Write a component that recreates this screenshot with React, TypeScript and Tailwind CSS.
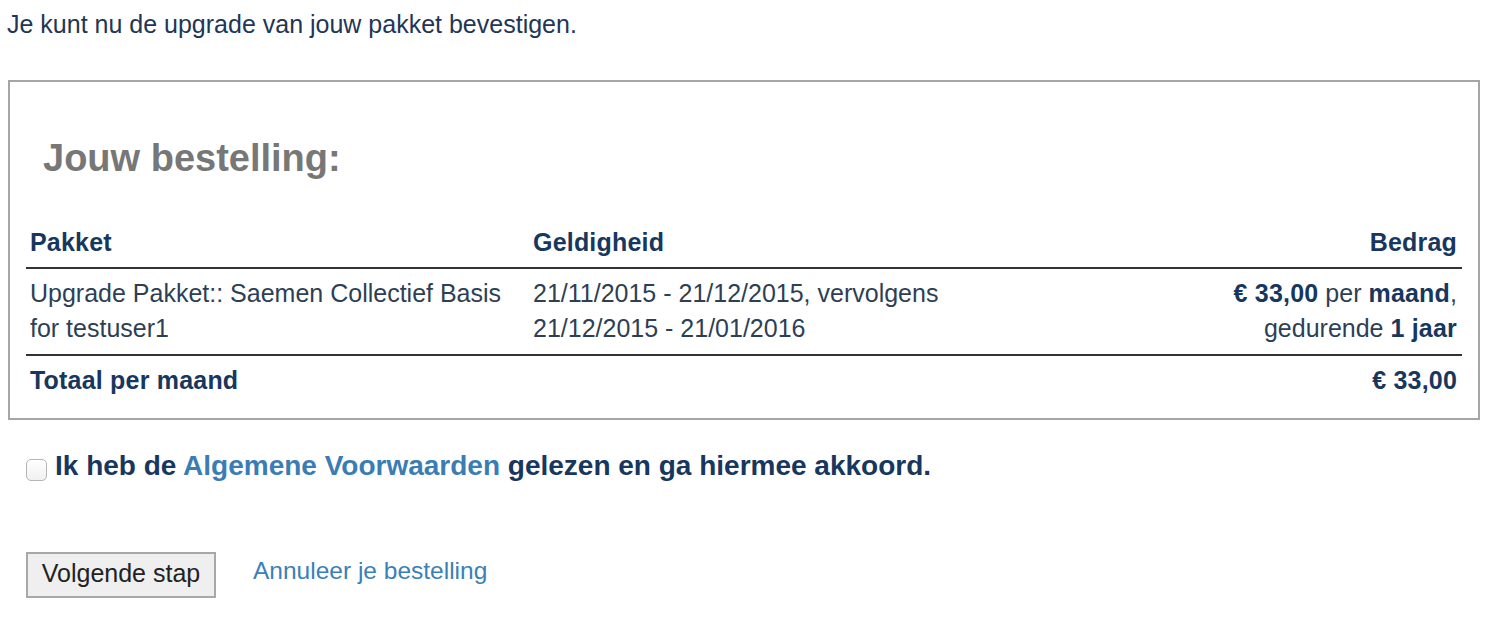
import React from "react";

export default function App() {
  const navy = "text-[#17375e] tracking-[0.2px]";
  return (
    <div className="w-[1500px] h-[621px] bg-white font-['Liberation_Sans',Arial,sans-serif] text-[#17375e] pl-[7px] pr-[20px] pt-[10px]">
      <p className="text-[25px] leading-[28px] text-[#1f3656]">Je kunt nu de upgrade van jouw pakket bevestigen.</p>

      <div className="mt-[42px] ml-[1px] border-2 border-[#a6a6a6] px-[16px] pt-[54px] pb-[22px]">
        <h2 className="ml-[17px] text-[38px] leading-[44px] font-bold text-[#777777]">Jouw bestelling:</h2>
        <table className="mt-[47px] w-full border-collapse text-[25px]">
          <thead>
            <tr className="border-b-2 border-[#333333]">
              <th className="text-left font-bold tracking-[0.2px] pl-[4px] pb-[10px] w-[507px] leading-[30px]">Pakket</th>
              <th className="text-left font-bold tracking-[0.2px] pb-[10px] leading-[30px]">Geldigheid</th>
              <th className="text-right font-bold tracking-[0.2px] pr-[5px] pb-[10px] leading-[30px]">Bedrag</th>
            </tr>
          </thead>
          <tbody>
            <tr className="border-b-2 border-[#333333] align-top">
              <td className="pl-[4px] pt-[7px] pb-[8px] leading-[35px] text-[#2e3f55]">
                Upgrade Pakket:: Saemen Collectief Basis
                <br />
                for testuser1
              </td>
              <td className="pt-[7px] pb-[8px] leading-[35px] text-[#2e3f55]">
                21/11/2015 - 21/12/2015, vervolgens
                <br />
                21/12/2015 - 21/01/2016
              </td>
              <td className="text-right pr-[5px] pt-[7px] pb-[8px] leading-[35px] text-[#2e3f55]">
                <b className={navy}>€ 33,00</b> per <b className={navy}>maand</b>,
                <br />
                gedurende <b className={navy}>1 jaar</b>
              </td>
            </tr>
            <tr>
              <td className="pl-[4px] pt-[8px] font-bold tracking-[0.2px] leading-[32px]">Totaal per maand</td>
              <td></td>
              <td className="text-right pr-[5px] pt-[8px] font-bold tracking-[0.2px] leading-[32px]">€ 33,00</td>
            </tr>
          </tbody>
        </table>
      </div>

      <div className="mt-[31px] ml-[19px] flex items-start gap-[8px]">
        <span className="mt-[8px] block w-[21px] h-[22px] rounded-[5px] border border-[#b5b5b5] bg-gradient-to-b from-white to-[#f0f0f0]"></span>
        <p className="text-[28px] leading-[30px] font-bold">
          Ik heb de <a className="text-[#3a7db5]">Algemene Voorwaarden</a> gelezen en ga hiermee akkoord.
        </p>
      </div>

      <div className="mt-[71px] ml-[19px] flex items-center gap-[37px]">
        <button className="w-[190px] h-[46px] border-2 border-[#a8a8a8] bg-[#efefef] text-[25px] leading-[30px] text-[#222222] pb-[4px]">Volgende stap</button>
        <a className="text-[24.5px] text-[#3a80b8] -mt-[8px]">Annuleer je bestelling</a>
      </div>
    </div>
  );
}
